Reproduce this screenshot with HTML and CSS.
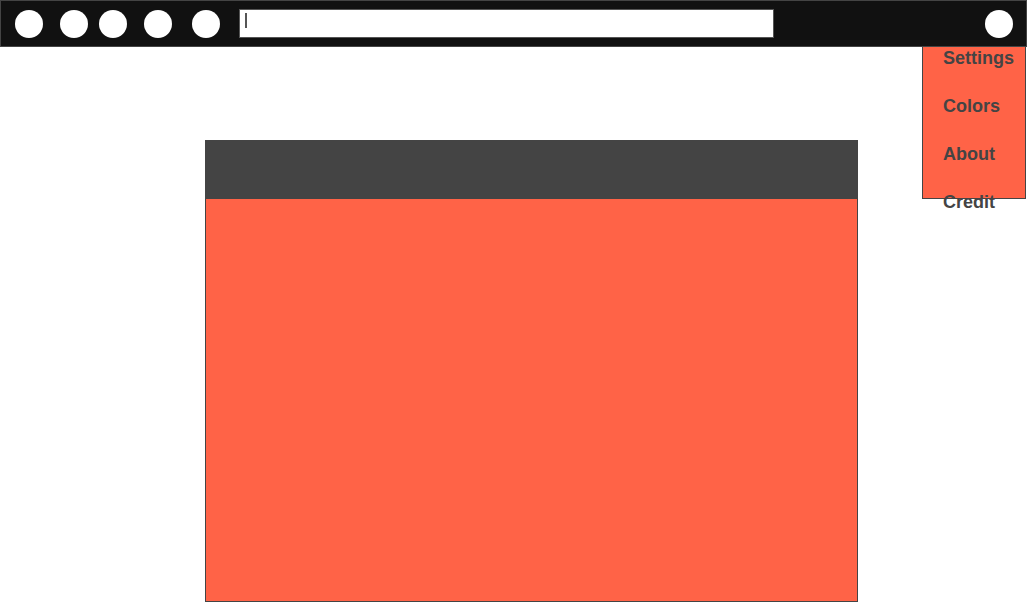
FILE: index.html
```html
<!DOCTYPE html>
<html>
<head>
<meta charset="utf-8">
<link rel="stylesheet" href="styles.css">
</head>
<body>
<div class="bar">
  <span class="dot"></span>
  <span class="dot d2"></span>
  <span class="dot d3"></span>
  <span class="dot d4"></span>
  <span class="dot d5"></span>
  <div class="search"><span class="caret"></span></div>
  <span class="dot menu-btn"></span>
</div>
<ul class="dropdown">
  <li>Settings</li>
  <li>Colors</li>
  <li>About</li>
  <li>Credit</li>
</ul>
<div class="panel">
  <div class="panel-head"></div>
  <div class="panel-body"></div>
</div>
</body>
</html>
```

FILE: styles.css
```css
html, body {
  margin: 0;
  padding: 0;
  background: #fff;
  font-family: "Liberation Sans", Arial, sans-serif;
  overflow: hidden;
}
.bar {
  box-sizing: border-box;
  width: 1027px;
  height: 47px;
  background: #111;
  border: 1px solid #444;
  display: flex;
  align-items: center;
  padding: 0 13px 0 14px;
}
.dot {
  flex: none;
  width: 28px;
  height: 28px;
  border-radius: 50%;
  background: #fff;
}
.d2 { margin-left: 17px; }
.d3 { margin-left: 11px; }
.d4 { margin-left: 17px; }
.d5 { margin-left: 20px; }
.search {
  box-sizing: border-box;
  flex: none;
  width: 535px;
  height: 29px;
  margin-left: 19px;
  background: #fff;
  border: 1px solid #555;
  display: flex;
  align-items: flex-start;
  padding: 3px 0 0 5px;
}
.caret {
  width: 2px;
  height: 15px;
  background: #555;
}
.menu-btn { margin-left: auto; }
.dropdown {
  position: absolute;
  left: 922px;
  top: 46px;
  box-sizing: border-box;
  width: 104px;
  height: 153px;
  margin: 0;
  padding: 1px 0 0;
  list-style: none;
  background: #ff6347;
  border: 1px solid #444;
}
.dropdown li {
  height: 48px;
  line-height: 20px;
  padding-left: 20px;
  font-size: 18px;
  font-weight: bold;
  color: #444;
  white-space: nowrap;
}
.panel {
  box-sizing: border-box;
  width: 653px;
  height: 462px;
  margin: 93px 0 0 205px;
  border: 1px solid #444;
  display: flex;
  flex-direction: column;
}
.panel-head {
  height: 58px;
  background: #444;
}
.panel-body {
  flex: 1;
  background: #ff6347;
}
```
